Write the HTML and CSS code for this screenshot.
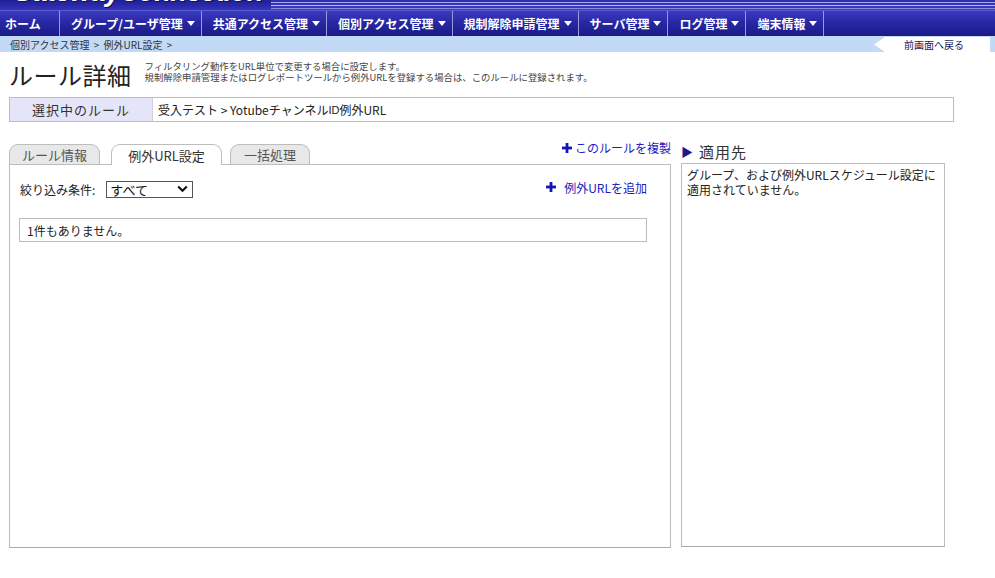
FILE: index.html
```html
<!DOCTYPE html>
<html lang="ja">
<head>
<meta charset="utf-8">
<title>ルール詳細</title>
<link rel="stylesheet" href="styles.css">
</head>
<body>
<header class="banner">
  <div class="logo">GatewayConnection</div>
  <div class="stripes"></div>
</header>
<nav class="nav">
  <div class="nav-item home">ホーム</div>
  <div class="nav-item">グループ/ユーザ管理<span class="caret"></span></div>
  <div class="nav-item">共通アクセス管理<span class="caret"></span></div>
  <div class="nav-item">個別アクセス管理<span class="caret"></span></div>
  <div class="nav-item">規制解除申請管理<span class="caret"></span></div>
  <div class="nav-item">サーバ管理<span class="caret"></span></div>
  <div class="nav-item">ログ管理<span class="caret"></span></div>
  <div class="nav-item">端末情報<span class="caret"></span></div>
</nav>
<div class="crumbs">
  <div class="crumb-text">個別アクセス管理 &gt; 例外URL設定 &gt;</div>
  <div class="back">前画面へ戻る</div>
</div>
<div class="page-head">
  <h1 class="title">ルール詳細</h1>
  <p class="desc">フィルタリング動作をURL単位で変更する場合に設定します。<br>規制解除申請管理またはログレポートツールから例外URLを登録する場合は、このルールに登録されます。</p>
</div>
<div class="rule-row">
  <div class="rule-label">選択中のルール</div>
  <div class="rule-value">受入テスト &gt; Yotubeチャンネル<span class="lat">ID</span>例外URL</div>
</div>
<main class="main">
  <section class="left">
    <div class="tabs">
      <div class="tab">ルール情報</div>
      <div class="tab active">例外URL設定</div>
      <div class="tab tab3">一括処理</div>
      <a class="link dup"><svg class="plus" width="10" height="10" viewBox="0 0 10 10"><rect x="3.6" y="0" width="2.8" height="10" fill="#1515b0"/><rect x="0" y="3.6" width="10" height="2.8" fill="#1515b0"/></svg>このルールを複製</a>
    </div>
    <div class="panel">
      <div class="filter">
        <span class="filter-label">絞り込み条件:</span>
        <div class="select"><span>すべて</span><svg width="11" height="8" viewBox="0 0 11 8"><path d="M1.2 1.5 L5.5 5.8 L9.8 1.5" fill="none" stroke="#111" stroke-width="2.2"/></svg></div>
        <a class="link add"><svg class="plus" width="10" height="10" viewBox="0 0 10 10"><rect x="3.6" y="0" width="2.8" height="10" fill="#1515b0"/><rect x="0" y="3.6" width="10" height="2.8" fill="#1515b0"/></svg>例外URLを追加</a>
      </div>
      <div class="empty">1件もありません。</div>
    </div>
  </section>
  <aside class="right">
    <div class="right-head"><span class="tri">▶</span>適用先</div>
    <div class="right-box">グループ、および例外URLスケジュール設定に<br>適用されていません。</div>
  </aside>
</main>
</body>
</html>
```
FILE: styles.css
```css
* { box-sizing: border-box; }
body {
  margin: 0;
  font-family: "Noto Sans CJK JP", "Liberation Sans", sans-serif;
  color: #222;
  background: #fff;
  width: 995px;
}
.banner {
  height: 10px;
  overflow: hidden;
  display: flex;
  background: linear-gradient(#1e1e96, #3434b8);
}
.logo {
  font-family: "Liberation Sans", sans-serif;
  font-weight: bold;
  font-style: italic;
  font-size: 27px;
  line-height: 30px;
  margin-top: -23px;
  padding-left: 12px;
  color: #fff;
  letter-spacing: -0.5px;
  text-shadow: 1px 1px 0 #10105a;
  white-space: nowrap;
}
.stripes {
  flex: 1;
  margin-left: 8px;
  background:
    linear-gradient(#3030b0 0, #3030b0 2px, #a8a8ec 2px, #a8a8ec 3px, #3434b6 3px, #3434b6 5px, #c0c0f2 5px, #c0c0f2 6px, #3838bc 6px, #3838bc 8px, #8a8ae0 8px, #8a8ae0 9px, #3a3abe 9px);
}
.nav {
  height: 26px;
  display: flex;
  background: linear-gradient(#3a3abf 0%, #2828a6 45%, #1a1a86 100%);
  border-top: 1px solid #5a5ad2;
}
.nav-item {
  display: flex;
  align-items: center;
  padding: 0 6px 0 11px;
  color: #fff;
  font-weight: bold;
  font-size: 12px;
  white-space: nowrap;
  border-right: 1px solid #9a9ada;
}
.nav-item.home { width: 60px; padding-left: 5px; }
.caret {
  display: inline-block;
  width: 0;
  height: 0;
  margin-left: 4px;
  border-left: 4px solid transparent;
  border-right: 4px solid transparent;
  border-top: 5px solid #fff;
}
.crumbs {
  height: 16px;
  display: flex;
  align-items: center;
  justify-content: space-between;
  background: #c2daf6;
}
.crumb-text {
  font-size: 10px;
  color: #333;
  padding-left: 10px;
  word-spacing: 2px;
}
.back {
  align-self: stretch;
  margin: 1px 5px 0 0;
  width: 116px;
  background: #fff;
  font-size: 10px;
  color: #1a1a5a;
  display: flex;
  align-items: center;
  padding-left: 30px;
  clip-path: polygon(11px 0, 100% 0, 100% 100%, 11px 100%, 0 50%);
}
.page-head {
  display: flex;
  align-items: flex-start;
  padding: 0 9px;
  height: 45px;
}
.title {
  margin: 9px 0 0;
  font-size: 24px;
  line-height: 28px;
  font-weight: normal;
  color: #222;
  letter-spacing: 0.5px;
}
.desc {
  margin: 9px 0 0 13px;
  font-size: 9.4px;
  line-height: 11px;
  color: #444;
}
.rule-row {
  margin-left: 9px;
  width: 945px;
  height: 25px;
  display: flex;
  border: 1px solid #bdbdbd;
}
.rule-label {
  width: 143px;
  background: #e5e5f9;
  border-right: 1px solid #cfcfdf;
  display: flex;
  align-items: center;
  justify-content: center;
  font-size: 13px;
  color: #333;
  letter-spacing: 1px;
}
.rule-value {
  display: flex;
  align-items: center;
  padding-left: 5px;
  font-size: 12px;
  color: #222;
}
.lat { font-family: "Liberation Sans", sans-serif; font-size: 11px; }
.main {
  display: flex;
  gap: 10px;
  margin: 22px 0 0 9px;
}
.left {
  width: 662px;
  display: flex;
  flex-direction: column;
}
.tabs {
  height: 20px;
  display: flex;
  align-items: flex-end;
  gap: 11px;
  position: relative;
  z-index: 1;
}
.tab {
  height: 20px;
  width: 91px;
  border: 1px solid #bdbdbd;
  border-bottom: none;
  border-radius: 9px 9px 0 0;
  background: #e8e8e8;
  color: #555;
  font-size: 13px;
  display: flex;
  align-items: center;
  justify-content: center;
}
.tab.active {
  width: 111px;
  height: 21px;
  margin-bottom: -1px;
  background: #fff;
  color: #333;
}
.tab.tab3 { width: 80px; margin-left: -3px; }
.link {
  color: #1b1bc0;
  font-size: 12px;
  display: flex;
  align-items: center;
  white-space: nowrap;
}
.plus { margin-right: 3px; flex: none; }
.dup {
  margin-left: auto;
  align-self: flex-start;
  margin-top: -5px;
}
.panel {
  height: 384px;
  border: 1px solid #bdbdbd;
  border-bottom-color: #aaa;
  padding: 15px 23px 0 9px;
}
.filter {
  display: flex;
  align-items: center;
  height: 18px;
}
.filter-label {
  font-size: 12px;
  color: #222;
  margin-left: 1px;
}
.select {
  margin-left: 11px;
  width: 87px;
  height: 17px;
  border: 1px solid #555;
  display: flex;
  align-items: center;
  justify-content: space-between;
  padding: 0 4px 0 3px;
  font-size: 13px;
  color: #111;
}
.add {
  margin-left: auto;
  margin-top: -4px;
}
.add .plus { margin-right: 8px; }
.empty {
  margin-top: 20px;
  height: 24px;
  border: 1px solid #bdbdbd;
  display: flex;
  align-items: center;
  padding-left: 7px;
  font-size: 12px;
  color: #222;
}
.right {
  width: 264px;
  display: flex;
  flex-direction: column;
}
.right-head {
  height: 23px;
  margin-top: -4px;
  display: flex;
  align-items: center;
  font-size: 15px;
  color: #333;
  letter-spacing: 1px;
}
.tri {
  font-size: 12px;
  color: #1a1a90;
  margin-right: 5px;
}
.right-box {
  height: 384px;
  border: 1px solid #bdbdbd;
  border-bottom-color: #aaa;
  padding: 3px 5px;
  font-size: 12px;
  line-height: 15px;
  color: #222;
  white-space: nowrap;
}
```
